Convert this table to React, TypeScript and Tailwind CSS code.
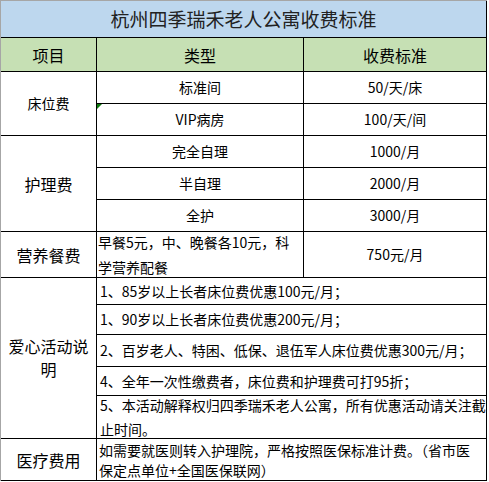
import React from 'react';

const cell = 'border-r border-b border-black flex items-center overflow-hidden';
const center = `${cell} justify-center text-center`;
const left = `${cell} justify-start text-left`;

const careRows = [
  { name: '完全自理', price: '1000/月' },
  { name: '半自理', price: '2000/月' },
  { name: '全护', price: '3000/月' },
];

const offers = [
  '1、85岁以上长者床位费优惠100元/月；',
  '1、90岁以上长者床位费优惠200元/月；',
  '2、百岁老人、特困、低保、退伍军人床位费优惠300元/月；',
  '4、全年一次性缴费者，床位费和护理费可打95折；',
];

export default function App() {
  return (
    <div
      className="w-[489px] h-[482px] bg-white text-black text-[14px]"
      style={{ fontFamily: '"Noto Sans CJK SC", "Noto Sans", sans-serif' }}
    >
      <div className="grid w-[487px] grid-cols-[96px_207px_183px] grid-rows-[37px_34px_32px_32px_32px_32px_32px_46px_27px_30px_32px_29px_43px_42px] border-l border-t border-[#a6a6a6]">
        {/* title */}
        <div className={`${center} col-span-3 bg-[#bdd7ee] text-[19px] text-[#222]`}>
          杭州四季瑞禾老人公寓收费标准
        </div>

        {/* header */}
        <div className={`${center} bg-[#c6e0b4] text-[16px]`}>项目</div>
        <div className={`${center} bg-[#c6e0b4] text-[16px]`}>类型</div>
        <div className={`${center} bg-[#c6e0b4] text-[16px]`}>收费标准</div>

        {/* 床位费 */}
        <div className={`${center} row-span-2`}>床位费</div>
        <div className={center}>标准间</div>
        <div className={center}>50/天/床</div>
        <div className={`${center} relative`}>
          <svg className="absolute -left-px top-0" width="6" height="6" viewBox="0 0 6 6">
            <polygon points="0,0 6,0 0,6" fill="#0e7a0e" />
          </svg>
          VIP病房
        </div>
        <div className={center}>100/天/间</div>

        {/* 护理费 */}
        <div className={`${center} row-span-3 text-[16px]`}>护理费</div>
        {careRows.map((r) => (
          <React.Fragment key={r.name}>
            <div className={center}>{r.name}</div>
            <div className={center}>{r.price}</div>
          </React.Fragment>
        ))}

        {/* 营养餐费 */}
        <div className={`${center} text-[16px]`}>营养餐费</div>
        <div className={`${left} pl-px leading-[25px] whitespace-nowrap`}>
          <div>
            早餐5元，中、晚餐各10元，科
            <br />
            学营养配餐
          </div>
        </div>
        <div className={center}>750元/月</div>

        {/* 爱心活动说明 */}
        <div className={`${center} row-span-5 text-[16px] leading-[23px]`}>
          <div>
            爱心活动说
            <br />
            明
          </div>
        </div>
        {offers.map((o, i) => (
          <div key={i} className={`${left} col-span-2 pl-[3px] whitespace-nowrap`}>
            {o}
          </div>
        ))}
        <div className={`${left} col-span-2 pl-[3px] leading-[24px] whitespace-nowrap`}>
          <div>
            5、本活动解释权归四季瑞禾老人公寓，所有优惠活动请关注截
            <br />
            止时间。
          </div>
        </div>

        {/* 医疗费用 */}
        <div className={`${center} text-[16px]`}>医疗费用</div>
        <div className={`${left} col-span-2 pl-[2px] leading-[20px] whitespace-nowrap`}>
          <div>
            如需要就医则转入护理院，严格按照医保标准计费。（省市医
            <br />
            保定点单位+全国医保联网）
          </div>
        </div>
      </div>
    </div>
  );
}
